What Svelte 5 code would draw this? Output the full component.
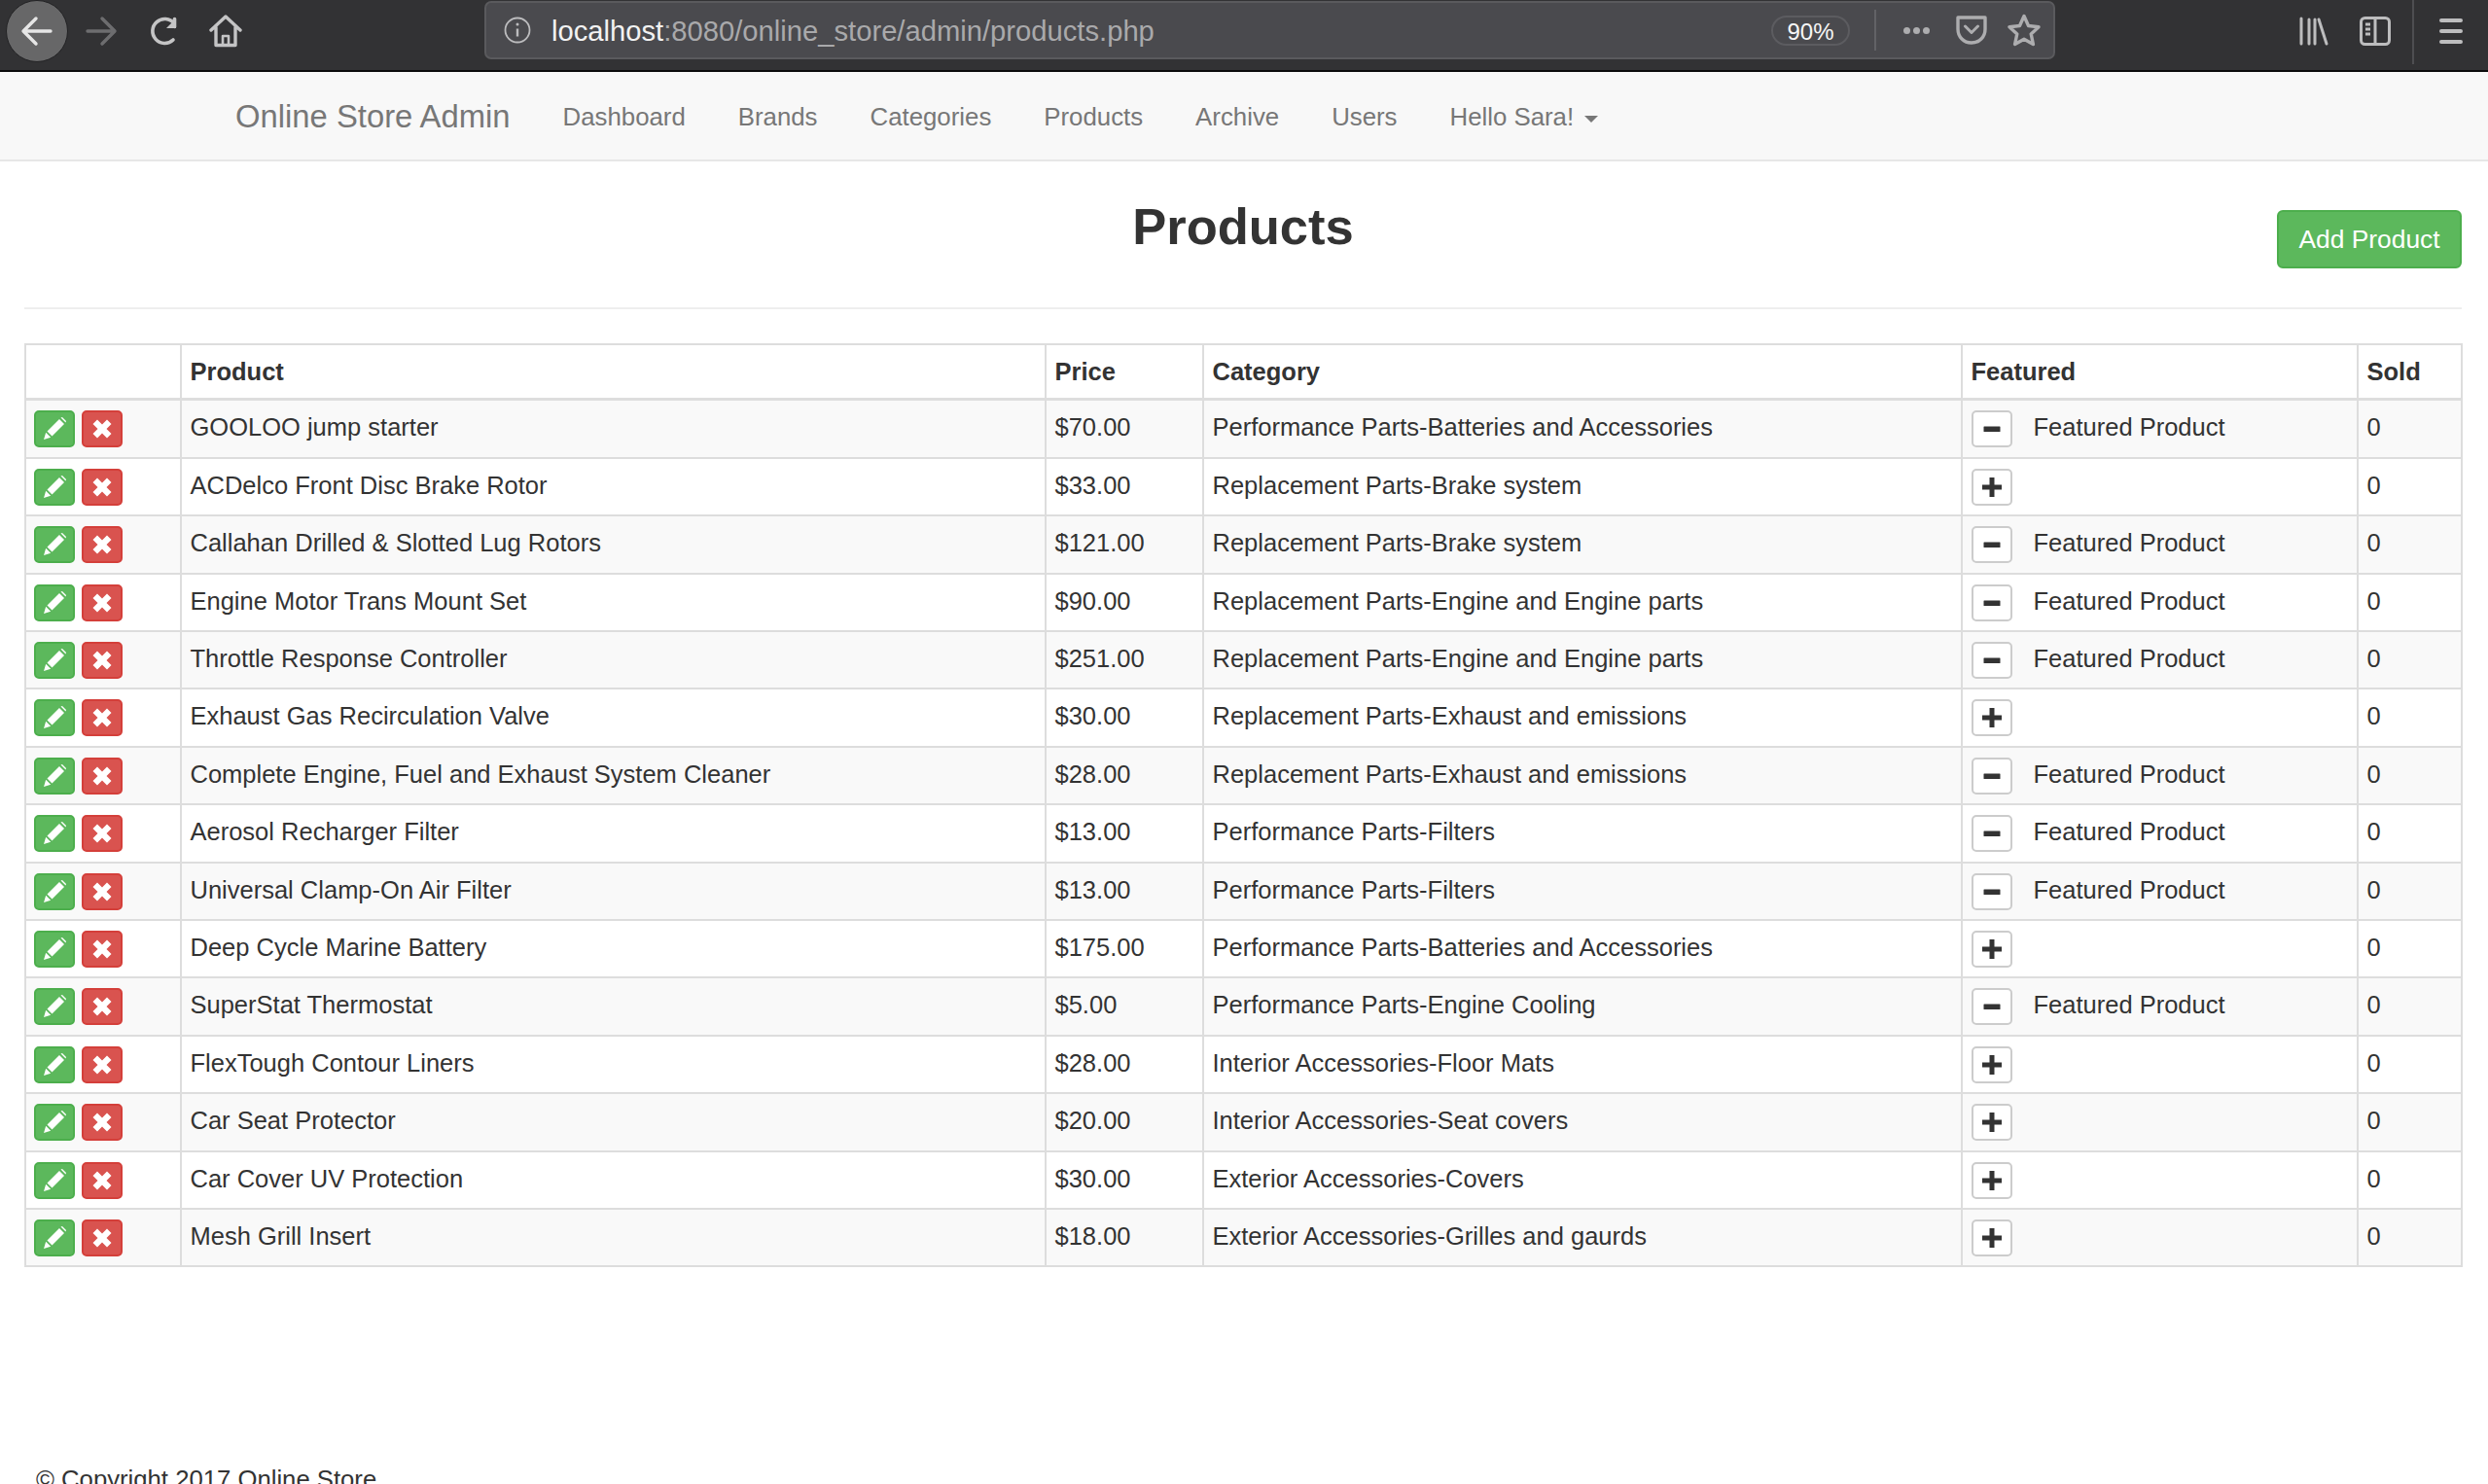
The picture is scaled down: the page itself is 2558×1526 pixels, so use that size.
<script>
  const links = ["Dashboard", "Brands", "Categories", "Products", "Archive", "Users"];

  const products = [
    { name: "GOOLOO jump starter", price: "$70.00", category: "Performance Parts-Batteries and Accessories", featured: true },
    { name: "ACDelco Front Disc Brake Rotor", price: "$33.00", category: "Replacement Parts-Brake system", featured: false },
    { name: "Callahan Drilled & Slotted Lug Rotors", price: "$121.00", category: "Replacement Parts-Brake system", featured: true },
    { name: "Engine Motor Trans Mount Set", price: "$90.00", category: "Replacement Parts-Engine and Engine parts", featured: true },
    { name: "Throttle Response Controller", price: "$251.00", category: "Replacement Parts-Engine and Engine parts", featured: true },
    { name: "Exhaust Gas Recirculation Valve", price: "$30.00", category: "Replacement Parts-Exhaust and emissions", featured: false },
    { name: "Complete Engine, Fuel and Exhaust System Cleaner", price: "$28.00", category: "Replacement Parts-Exhaust and emissions", featured: true },
    { name: "Aerosol Recharger Filter", price: "$13.00", category: "Performance Parts-Filters", featured: true },
    { name: "Universal Clamp-On Air Filter", price: "$13.00", category: "Performance Parts-Filters", featured: true },
    { name: "Deep Cycle Marine Battery", price: "$175.00", category: "Performance Parts-Batteries and Accessories", featured: false },
    { name: "SuperStat Thermostat", price: "$5.00", category: "Performance Parts-Engine Cooling", featured: true },
    { name: "FlexTough Contour Liners", price: "$28.00", category: "Interior Accessories-Floor Mats", featured: false },
    { name: "Car Seat Protector", price: "$20.00", category: "Interior Accessories-Seat covers", featured: false },
    { name: "Car Cover UV Protection", price: "$30.00", category: "Exterior Accessories-Covers", featured: false },
    { name: "Mesh Grill Insert", price: "$18.00", category: "Exterior Accessories-Grilles and gaurds", featured: false }
  ];
</script>

<div class="page">
  <header class="browser">
    <div class="round-back">
      <svg width="34" height="34" viewBox="0 0 34 34" fill="none" stroke="#e6e6e6" stroke-width="3.4" stroke-linecap="round" stroke-linejoin="round">
        <path d="M31 17H4M16 4L3 17l13 13" />
      </svg>
    </div>
    <svg class="fwd" width="34" height="34" viewBox="0 0 34 34" fill="none" stroke="#6d6d6f" stroke-width="3.4" stroke-linecap="round" stroke-linejoin="round">
      <path d="M3 17h27M18 4l13 13-13 13" />
    </svg>
    <svg class="reload" width="32" height="32" viewBox="0 0 32 32" fill="none" stroke="#c4c4c5" stroke-width="3.6" stroke-linecap="round">
      <path d="M25 25a12.500 12.500 0 1 1 1-17" />
      <path d="M28 3v10H18" fill="#c4c4c5" stroke="none" />
      <path d="M26.500 3.500v8" />
    </svg>
    <svg class="home" width="34" height="34" viewBox="0 0 34 34" fill="none" stroke="#c4c4c5" stroke-width="3.400" stroke-linejoin="round" stroke-linecap="round">
      <path d="M2 16L17 2l15 14M7 13v18.500h20V13" />
      <path d="M14 31v-9h6v9" stroke-width="2.600" />
    </svg>

    <div class="urlbar">
      <svg class="info" width="28" height="28" viewBox="0 0 28 28" fill="none" stroke="#bcbcbe" stroke-width="1.800">
        <circle cx="14" cy="14" r="12.500" />
        <path d="M14 12.500v8" stroke-width="2.400" />
        <circle cx="14" cy="8" r="1.500" fill="#bcbcbe" stroke="none" />
      </svg>
      <div class="url"><span class="host">localhost</span>:8080/online_store/admin/products.php</div>
      <div class="zoom-pill">90%</div>
      <div class="url-sep"></div>
      <div class="dots"><i></i><i></i><i></i></div>
      <svg class="pocket" width="32" height="30" viewBox="0 0 32 30" fill="none" stroke="#adadaf" stroke-width="3.400" stroke-linejoin="round" stroke-linecap="round">
        <path d="M2 2h28v12c0 8-6 14-14 14S2 22 2 14z" />
        <path d="M9.500 11l6.500 6.500 6.500-6.500" stroke-width="3" />
      </svg>
      <svg class="star" width="34" height="34" viewBox="0 0 34 34" fill="none" stroke="#adadaf" stroke-width="3.400" stroke-linejoin="round">
        <path d="M17 2.500l4.500 10 10.500 1.200-7.800 7.200 2.200 10.600L17 26.200l-9.400 5.300 2.200-10.600L2 13.700l10.500-1.200z" />
      </svg>
    </div>

    <svg class="library" width="30" height="30" viewBox="0 0 30 30" stroke="#bdbdbe" stroke-width="3" stroke-linecap="round" fill="none">
      <path d="M2 2v26M10 3v25M16 3v25M20 3l8 25" />
    </svg>
    <svg class="sidebar" width="32" height="30" viewBox="0 0 32 30" fill="none" stroke="#bdbdbe" stroke-width="3">
      <rect x="1.500" y="1.500" width="29" height="27" rx="4" />
      <path d="M16 2v26M6 8h5M6 13h5M6 18h5" />
    </svg>
    <div class="toolbar-sep"></div>
    <div class="burger"><i></i><i></i><i></i></div>
  </header>

  <nav class="navbar">
    <a class="brand" href="#top">Online Store Admin</a>
    {#each links as link}
      <a class="nav-link" href="#top">{link}</a>
    {/each}
    <a class="nav-link" href="#top">Hello Sara! <span class="caret"></span></a>
  </nav>

  <main class="content">
    <div class="title-row">
      <h2>Products</h2>
      <a class="add-btn" href="#top">Add Product</a>
    </div>
    <hr />

    <table>
      <colgroup>
        <col style="width:160px" />
        <col style="width:889px" />
        <col style="width:162px" />
        <col style="width:780px" />
        <col style="width:407px" />
        <col style="width:107px" />
      </colgroup>
      <thead>
        <tr>
          <th></th>
          <th>Product</th>
          <th>Price</th>
          <th>Category</th>
          <th>Featured</th>
          <th>Sold</th>
        </tr>
      </thead>
      <tbody>
        {#each products as p}
          <tr>
            <td class="actions">
              <div class="action-btns">
                <button class="btn edit" aria-label="Edit">
                  <svg width="24" height="24" viewBox="0 0 24 24" fill="#fff">
                    <path d="M1 23l2.200-7.200 5 5z" />
                    <path d="M4.500 14.500L17 2l5 5L9.500 19.500z" />
                    <path d="M18.500 0.500l1.500-.500 4 4-.500 1.500z" />
                  </svg>
                </button>
                <button class="btn remove" aria-label="Delete">
                  <svg width="20" height="20" viewBox="0 0 20 20" fill="#fff">
                    <path d="M5 0.500L10 5.500 15 0.500 19.500 5 14.500 10 19.500 15 15 19.500 10 14.500 5 19.500 0.500 15 5.500 10 0.500 5z" />
                  </svg>
                </button>
              </div>
            </td>
            <td>{p.name}</td>
            <td>{p.price}</td>
            <td>{p.category}</td>
            <td>
              <div class="featured">
                <button class="btn toggle" aria-label={p.featured ? "Remove featured" : "Add featured"}>
                  <svg width="22" height="22" viewBox="0 0 22 22" fill="#333">
                    {#if p.featured}
                      <rect x="2.500" y="8.500" width="17" height="5.500" rx="0.500" />
                    {:else}
                      <path d="M8.500 1h5v7.500H21v5h-7.500V21h-5v-7.500H1v-5h7.500z" />
                    {/if}
                  </svg>
                </button>
                {#if p.featured}<span>Featured Product</span>{/if}
              </div>
            </td>
            <td>0</td>
          </tr>
        {/each}
      </tbody>
    </table>
  </main>

  <footer>© Copyright 2017 Online Store</footer>
</div>

<style>
  :global(body) {
    margin: 0;
    background: #fff;
  }

  .page {
    height: 1526px;
    overflow: hidden;
    font-family: "Liberation Sans", Arial, sans-serif;
    font-size: 25.5px;
    line-height: 36px;
    color: #333;
  }

  /* browser toolbar */
  .browser {
    height: 72px;
    background: #323234;
    border-bottom: 2px solid #0c0c0d;
    display: flex;
    align-items: center;
    color: #fff;
  }

  .browser svg {
    flex: none;
  }

  .round-back {
    width: 64px;
    height: 64px;
    margin: -8px 0 0 6px;
    border-radius: 50%;
    background: #676768;
    border: 1px solid #232325;
    box-sizing: border-box;
    display: flex;
    align-items: center;
    justify-content: center;
  }

  .fwd {
    margin: -8px 0 0 17px;
  }

  .reload {
    margin: -8px 0 0 32px;
  }

  .home {
    margin: -8px 0 0 30px;
  }

  .urlbar {
    width: 1615px;
    height: 60px;
    margin: -10px 0 0 249px;
    box-sizing: border-box;
    background: #4a4a4e;
    border: 2px solid #5a5a5d;
    border-radius: 7px;
    display: flex;
    align-items: center;
    padding-left: 18px;
  }

  .url {
    margin: 2px 0 0 21px;
    width: 1254px;
    font-size: 29.2px;
    color: #a9a9ab;
    white-space: nowrap;
  }

  .host {
    color: #f2f2f2;
  }

  .zoom-pill {
    width: 81px;
    height: 31px;
    box-sizing: border-box;
    border: 2px solid #5c5c60;
    border-radius: 16px;
    font-size: 24px;
    line-height: 29px;
    text-align: center;
    color: #f6f6f6;
  }

  .url-sep {
    width: 2px;
    height: 42px;
    margin-left: 25px;
    background: #626266;
  }

  .dots {
    margin-left: 28px;
    display: flex;
    gap: 3px;
  }

  .dots i {
    width: 7px;
    height: 7px;
    border-radius: 50%;
    background: #adadaf;
  }

  .pocket {
    margin-left: 27px;
  }

  .star {
    margin-left: 21px;
  }

  .library {
    margin: -8px 0 0 251px;
  }

  .sidebar {
    margin: -8px 0 0 32px;
  }

  .toolbar-sep {
    width: 2px;
    height: 66px;
    margin: -6px 0 0 22px;
    background: #4e4e51;
  }

  .burger {
    margin: -8px 0 0 26px;
    display: flex;
    flex-direction: column;
    gap: 7px;
  }

  .burger i {
    display: block;
    width: 24px;
    height: 4px;
    border-radius: 2px;
    background: #bdbdbe;
  }

  /* site navbar */
  .navbar {
    height: 88px;
    padding: 2px 0 0 242px;
    background: #f8f8f8;
    border-bottom: 2px solid #e7e7e7;
    display: flex;
    align-items: center;
    gap: 54px;
  }

  .navbar a {
    color: #777;
    font-size: 25.8px;
    text-decoration: none;
    white-space: nowrap;
  }

  .navbar .brand {
    font-size: 32.8px;
  }

  .caret {
    display: inline-block;
    margin-left: 4px;
    vertical-align: middle;
    border-top: 7px solid #777;
    border-left: 7px solid transparent;
    border-right: 7px solid transparent;
  }

  /* page body */
  .content {
    padding: 0 27px 0 25px;
  }

  .title-row {
    height: 150px;
    position: relative;
    text-align: center;
  }

  h2 {
    margin: 0;
    padding-top: 37px;
    font-size: 52.5px;
    line-height: 60px;
    font-weight: 700;
    color: #333;
  }

  .add-btn {
    position: absolute;
    top: 50px;
    right: 0;
    width: 190px;
    height: 60px;
    box-sizing: border-box;
    background: #5cb85c;
    border: 2px solid #4cae4c;
    border-radius: 6px;
    color: #fff;
    font-size: 26.4px;
    line-height: 56px;
    text-decoration: none;
    text-align: center;
  }

  hr {
    margin: 0;
    border: 0;
    border-top: 2px solid #eee;
  }

  table {
    margin-top: 35px;
    width: 2505px;
    table-layout: fixed;
    border-collapse: collapse;
    border: 2px solid #ddd;
  }

  th,
  td {
    border: 2px solid #ddd;
    padding: 9px 8.5px 7px;
    text-align: left;
    vertical-align: top;
  }

  th {
    height: 36px;
    padding-top: 9px;
    padding-bottom: 9px;
    font-weight: 700;
    border-bottom-width: 3px;
    box-sizing: content-box;
  }

  td {
    height: 59px;
    box-sizing: border-box;
  }

  /* 59.4px rows in the original, so every other row takes the extra pixel */
  tbody tr:nth-child(5n + 1) td,
  tbody tr:nth-child(5n + 3) td {
    height: 60px;
  }

  tbody tr:nth-child(odd) {
    background: #f9f9f9;
  }

  .action-btns {
    display: flex;
    gap: 7px;
    margin-top: 1px;
  }

  td.actions {
    padding-left: 8px;
  }

  .featured {
    display: flex;
    gap: 22px;
  }

  .btn {
    flex: none;
    width: 42px;
    height: 38px;
    margin: 0;
    padding: 0;
    box-sizing: border-box;
    border-radius: 5px;
    border: 2px solid transparent;
    display: flex;
    align-items: center;
    justify-content: center;
  }

  .edit {
    background: #5cb85c;
    border-color: #4cae4c;
  }

  .remove {
    background: #d9534f;
    border-color: #d43f3a;
  }

  .toggle {
    margin-top: 1px;
    background: #fff;
    border-color: #ccc;
  }

  footer {
    margin-top: 200px;
    padding-left: 37px;
    font-size: 25.7px;
  }
</style>
